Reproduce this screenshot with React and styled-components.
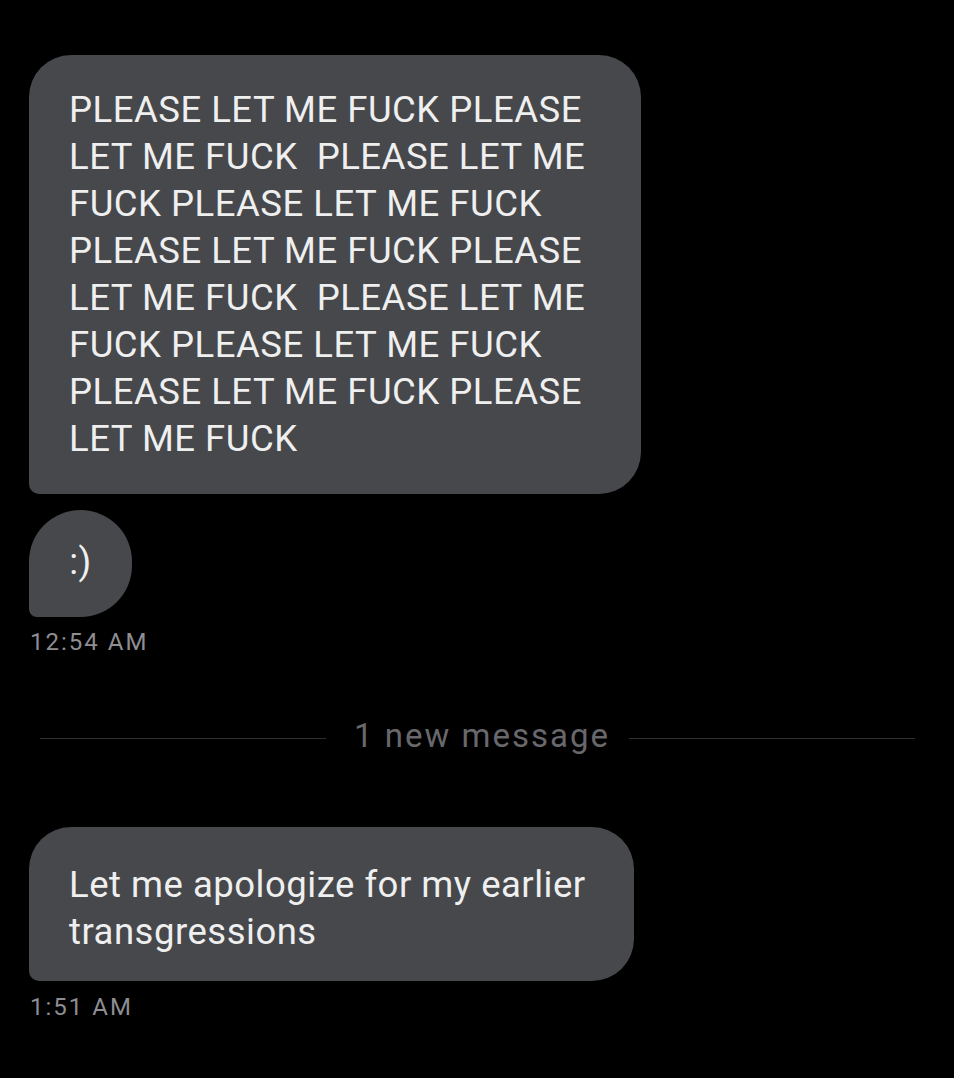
import React from "react";
import styled, { createGlobalStyle } from "styled-components";

const GlobalStyle = createGlobalStyle`
  html, body {
    margin: 0;
    background: #000;
  }
  body {
    font-family: Roboto, "Liberation Sans", sans-serif;
  }
`;

const Screen = styled.div`
  width: 954px;
  height: 1078px;
  background: #000;
  box-sizing: border-box;
  padding: 55px 29px 0 29px;
  display: flex;
  flex-direction: column;
`;

const Bubble = styled.div`
  align-self: flex-start;
  box-sizing: border-box;
  width: ${(p) => p.$width}px;
  min-height: ${(p) => p.$height || 0}px;
  padding: ${(p) => p.$pad || "30px 40px"};
  background: #46484c;
  color: #efefef;
  font-size: 36.5px;
  letter-spacing: 0.5px;
  line-height: 47px;
  border-radius: 42px 42px 42px 10px;
  margin-top: ${(p) => p.$top || 0}px;
  display: flex;
  align-items: center;
  justify-content: ${(p) => (p.$center ? "center" : "flex-start")};
`;

const Smiley = styled(Bubble)`
  border-radius: 52px 52px 52px 8px;
  padding: 0 0 4px 0;
`;

const Time = styled.div`
  color: #8d8d92;
  font-size: 24px;
  letter-spacing: 2px;
  line-height: 28px;
  margin-top: ${(p) => p.$top || 11}px;
  padding-left: 1px;
`;

const Divider = styled.div`
  display: flex;
  align-items: center;
  margin: 60px 10px 0 11px;
  color: #68686c;
  font-size: 33px;
  letter-spacing: 2px;
  line-height: 40px;

  &::before,
  &::after {
    content: "";
    flex: 1;
    height: 1px;
    margin-top: 5px;
    background: #2e2e30;
  }
`;

const DividerLabel = styled.span`
  margin: 0 19px 0 28px;
`;

const lines = [
  "PLEASE LET ME FUCK PLEASE",
  "LET ME FUCK\u00a0 PLEASE LET ME",
  "FUCK PLEASE LET ME FUCK",
  "PLEASE LET ME FUCK PLEASE",
  "LET ME FUCK\u00a0 PLEASE LET ME",
  "FUCK PLEASE LET ME FUCK",
  "PLEASE LET ME FUCK PLEASE",
  "LET ME FUCK",
];

export default function App() {
  return (
    <>
      <GlobalStyle />
      <Screen>
        <Bubble $width={612} $pad="31px 40px 32px 40px">
          <div>
            {lines.map((l, i) => (
              <div key={i}>{l}</div>
            ))}
          </div>
        </Bubble>
        <Smiley $width={103} $height={107} $top={16} $center>
          :)
        </Smiley>
        <Time>12:54 AM</Time>
        <Divider>
          <DividerLabel>1 new message</DividerLabel>
        </Divider>
        <Bubble $width={605} $top={71} $pad="34px 40px 26px 40px">
          <div>
            Let me apologize for my earlier
            <br />
            transgressions
          </div>
        </Bubble>
        <Time $top={12}>1:51 AM</Time>
      </Screen>
    </>
  );
}
